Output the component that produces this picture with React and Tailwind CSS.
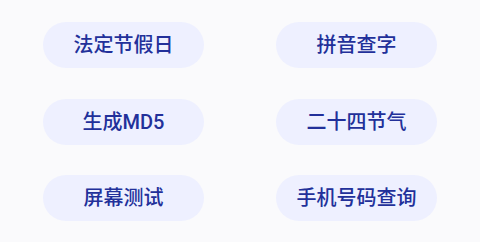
export default function App() {
  const items = ["法定节假日", "拼音查字", "生成MD5", "二十四节气", "屏幕测试", "手机号码查询"];
  return (
    <div className="w-[480px] h-[242px] bg-[#fafafc] px-[43px] pt-[22px]" style={{ fontFamily: '"Roboto", "Noto Sans CJK SC Medium", "Noto Sans CJK SC", sans-serif' }}>
      <div className="grid grid-cols-[161px_161px] gap-x-[72px] gap-y-[30.5px]">
        {items.map((t) => (
          <div key={t} className="h-[46px] rounded-full bg-[#eef0ff] flex items-center justify-center text-[20px] font-medium text-[#22309a]">
            {t}
          </div>
        ))}
      </div>
    </div>
  );
}
